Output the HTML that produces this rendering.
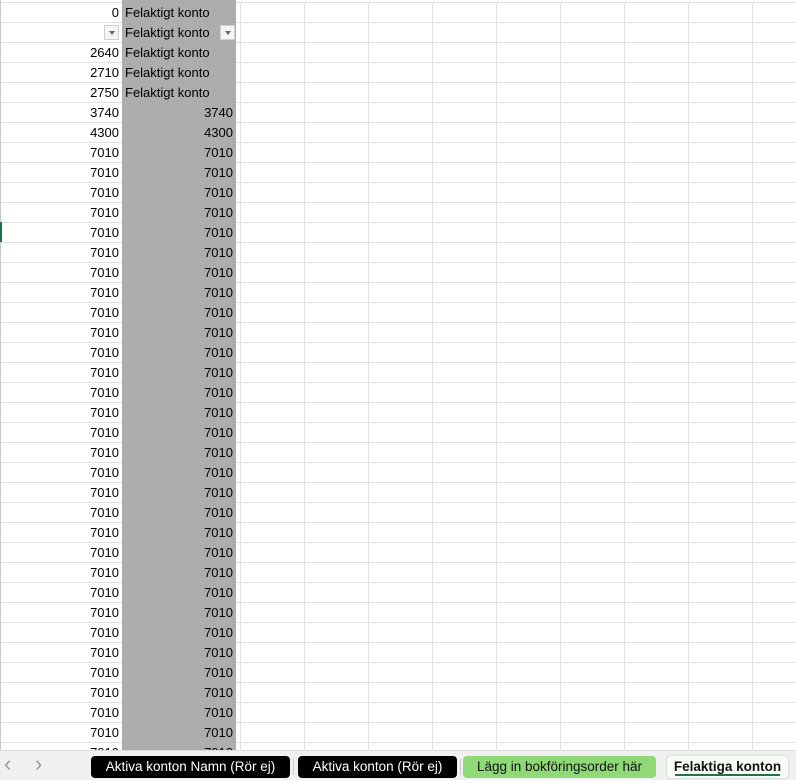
<!DOCTYPE html><html><head><style>
body{margin:0;width:796px;height:779px;overflow:hidden;background:#fff;font-family:"Liberation Sans",sans-serif;position:relative}
#grid{position:absolute;left:0;top:0;width:796px;height:750px;
background:
linear-gradient(#fff,#fff) 0 0/796px 2px no-repeat,
repeating-linear-gradient(to bottom,#e1e1e1 0 1px,transparent 1px 20px) 0 2px/796px 760px no-repeat,
repeating-linear-gradient(to right,#e1e1e1 0 1px,transparent 1px 64px) 239px 0/600px 760px no-repeat;
border-left:1px solid #c8c8c8;box-sizing:border-box}
#gray{position:absolute;left:122px;top:0;width:114px;height:750px;background:#adadad}
.r{position:absolute;font-size:13px;line-height:20px;color:#000}
.a{left:0;width:119px;text-align:right}
.b{left:122px;width:111px;text-align:right}
.t{left:125px}
.dd{position:absolute;width:15px;height:15px;background:#f4f4f4;border:1px solid #cfcfcf;box-sizing:border-box}
.dd:after{content:"";position:absolute;left:3.5px;top:5px;border-left:3.5px solid transparent;border-right:3.5px solid transparent;border-top:4px solid #666}
#bar{position:absolute;left:0;top:750px;width:796px;height:29px;background:#f0f0f0;border-top:1px solid #dcdcdc}
.tab{position:absolute;top:5px;height:22px;border-radius:4px;font-size:13.5px;line-height:22px;text-align:center}
</style></head><body>
<div id="grid"></div><div id="gray"></div>
<div style="position:absolute;left:0;top:222px;width:2px;height:20px;background:#217346"></div>
<div class="r a" style="top:3px">0</div><div class="r t" style="top:3px">Felaktigt konto</div>
<div class="dd" style="left:104px;top:25px"></div><div class="r t" style="top:23px">Felaktigt konto</div><div class="dd" style="left:220px;top:25px"></div>
<div class="r a" style="top:43px">2640</div><div class="r t" style="top:43px">Felaktigt konto</div>
<div class="r a" style="top:63px">2710</div><div class="r t" style="top:63px">Felaktigt konto</div>
<div class="r a" style="top:83px">2750</div><div class="r t" style="top:83px">Felaktigt konto</div>
<div class="r a" style="top:103px">3740</div><div class="r b" style="top:103px">3740</div>
<div class="r a" style="top:123px">4300</div><div class="r b" style="top:123px">4300</div>
<div id="rows"></div>
<script>
var h='';for(var y=143;y<=743;y+=20){h+='<div class="r a" style="top:'+y+'px">7010</div><div class="r b" style="top:'+y+'px">7010</div>';}
document.getElementById('rows').innerHTML=h;
</script>
<div id="bar">
<div style="position:absolute;left:4px;top:0px;font-size:22px;color:#999">&lsaquo;</div>
<div style="position:absolute;left:35px;top:0px;font-size:22px;color:#999">&rsaquo;</div>
<div class="tab" style="left:91px;width:199px;background:#000;color:#fff">Aktiva konton Namn (Rör ej)</div>
<div style="position:absolute;left:293px;top:8px;width:1px;height:16px;background:#ccc"></div>
<div class="tab" style="left:298px;width:159px;background:#000;color:#fff">Aktiva konton (Rör ej)</div>
<div style="position:absolute;left:460px;top:8px;width:1px;height:16px;background:#ccc"></div>
<div class="tab" style="left:463px;width:193px;background:#8fd977;color:#111">Lägg in bokföringsorder här</div>
<div class="tab" style="left:667px;width:121px;background:#f8fcf7;color:#111;font-weight:bold;box-shadow:0 0 2px #bbb">Felaktiga konton
<div style="position:absolute;left:8px;right:8px;bottom:2px;height:2px;background:#217346"></div></div>
</div>
</body></html>
